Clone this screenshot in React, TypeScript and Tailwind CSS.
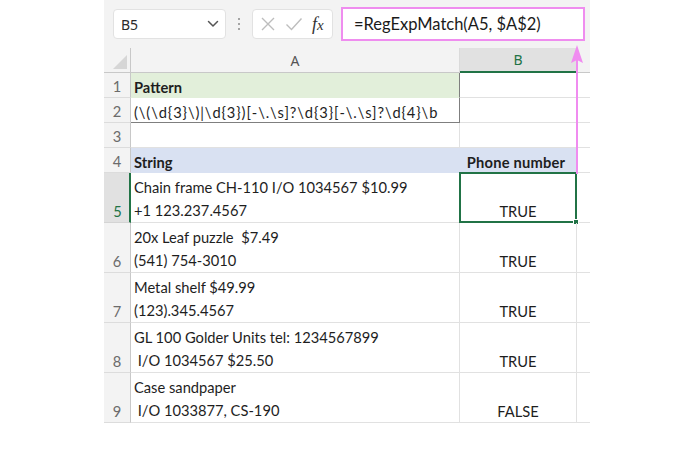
import React from "react";

const rows: { n: number; a: string[]; b: string }[] = [
  { n: 5, a: ["Chain frame CH-110 I/O 1034567 $10.99", "+1 123.237.4567"], b: "TRUE" },
  { n: 6, a: ["20x Leaf puzzle  $7.49", "(541) 754-3010"], b: "TRUE" },
  { n: 7, a: ["Metal shelf $49.99", "(123).345.4567"], b: "TRUE" },
  { n: 8, a: ["GL 100 Golder Units tel: 1234567899", " I/O 1034567 $25.50"], b: "TRUE" },
  { n: 9, a: ["Case sandpaper", " I/O 1033877, CS-190"], b: "FALSE" },
];

function RowHead({ n, active }: { n: number | string; active?: boolean }) {
  return (
    <div
      className={
        active
          ? "w-[27px] shrink-0 bg-[#e1e1e1] text-[#217346] border-b border-[#d4d4d4] border-r-2 border-r-[#217346] flex items-end justify-center pb-[1px] pl-[2px]"
          : "w-[27px] shrink-0 bg-[#f3f3f3] text-[#6b6b6b] border-b border-[#dcdcdc] border-r border-r-[#c8c8c8] flex items-end justify-center pb-[1px]"
      }
    >
      <span className="leading-[20px]">{n}</span>
    </div>
  );
}

export default function App() {
  return (
    <div className="w-[700px] h-[450px] bg-white relative overflow-hidden font-['Lato','Liberation_Sans',sans-serif] text-[14.7px] text-[#1e1e1e]">
      <div className="ml-[104px] w-[486px]">
        {/* Toolbar */}
        <div className="h-[48px] bg-[#f3f3f3] flex items-center pl-[9px]">
          <div className="w-[113px] h-[30px] bg-white border border-[#e2e2e2] rounded-[4px] flex items-center justify-between pl-[7px] pr-[6px]">
            <span className="text-[14px] text-[#2a2a2a] font-['Noto_Sans',sans-serif]">B5</span>
            <svg width="12" height="8" viewBox="0 0 12 8">
              <path d="M1.5 1.5 L6 6 L10.5 1.5" fill="none" stroke="#555" strokeWidth="1.5" strokeLinecap="round" strokeLinejoin="round" />
            </svg>
          </div>
          <div className="w-[26px] flex flex-col items-center justify-center gap-[3px]">
            <span className="w-[2px] h-[2px] bg-[#8a8a8a] rounded-full" />
            <span className="w-[2px] h-[2px] bg-[#8a8a8a] rounded-full" />
            <span className="w-[2px] h-[2px] bg-[#8a8a8a] rounded-full" />
          </div>
          <div className="w-[81px] h-[30px] bg-white border border-[#e2e2e2] rounded-[4px] flex items-center pl-[7px]">
            <svg width="16" height="16" viewBox="0 0 16 16">
              <path d="M2 2 L14 14 M14 2 L2 14" stroke="#bdbdbd" strokeWidth="1.4" fill="none" />
            </svg>
            <svg width="18" height="16" viewBox="0 0 18 16" className="ml-[9px]">
              <path d="M1.5 8.5 L6.5 13.5 L16.5 2.5" stroke="#bdbdbd" strokeWidth="1.4" fill="none" />
            </svg>
            <span className="ml-[9px] font-['Liberation_Serif',serif] italic text-[18px] text-[#333] leading-none">
              f<span className="text-[15px]">x</span>
            </span>
          </div>
          <div className="ml-[8px] w-[244px] h-[34px] bg-white border-2 border-[#ef8def] flex items-center pl-[11px]">
            <span className="text-[16.5px] text-[#1a1a1a]">=RegExpMatch(A5, $A$2)</span>
          </div>
        </div>

        {/* Column headers */}
        <div className="flex h-[25px]">
          <div className="w-[27px] shrink-0 bg-[#f3f3f3] border-b border-[#c8c8c8] border-r border-r-[#c8c8c8] relative">
            <svg className="absolute right-[3px] bottom-[3px]" width="14" height="14" viewBox="0 0 14 14">
              <path d="M14 0 L14 14 L0 14 Z" fill="#d6d6d6" />
            </svg>
          </div>
          <div className="w-[329px] shrink-0 bg-[#f3f3f3] border-b border-[#c8c8c8] border-r border-r-[#dadada] flex items-center justify-center text-[#555] text-[14px] font-['Noto_Sans',sans-serif]">
            A
          </div>
          <div className="w-[117px] shrink-0 bg-[#e1e1e1] border-b-2 border-[#217346] border-r border-r-[#cfcfcf] flex items-center justify-center text-[#217346] text-[14px] font-['Noto_Sans',sans-serif]">
            B
          </div>
          <div className="flex-1 bg-[#f3f3f3] border-b border-[#c8c8c8]" />
        </div>

        {/* Row 1 */}
        <div className="flex h-[25px]">
          <RowHead n={1} />
          <div className="w-[329px] shrink-0 bg-[#e2efda] border-b border-[#e2efda] border-r border-r-[#7f7f7f] flex items-end pl-[3px] font-bold">
            <span className="leading-[20px]">Pattern</span>
          </div>
          <div className="w-[117px] shrink-0 border-b border-[#e1e1e1] border-r border-r-[#e1e1e1]" />
          <div className="flex-1 border-b border-[#e1e1e1]" />
        </div>

        {/* Row 2 */}
        <div className="flex h-[25px]">
          <RowHead n={2} />
          <div className="w-[329px] shrink-0 border-b border-[#7f7f7f] border-r border-r-[#7f7f7f] flex items-end pl-[3px]">
            <span className="leading-[20px] whitespace-pre tracking-[0.9px]">{"(\\(\\d{3}\\)|\\d{3})[-\\.\\s]?\\d{3}[-\\.\\s]?\\d{4}\\b"}</span>
          </div>
          <div className="w-[117px] shrink-0 border-b border-[#e1e1e1] border-r border-r-[#e1e1e1]" />
          <div className="flex-1 border-b border-[#e1e1e1]" />
        </div>

        {/* Row 3 */}
        <div className="flex h-[25px]">
          <RowHead n={3} />
          <div className="w-[329px] shrink-0 border-b border-[#e1e1e1] border-r border-r-[#e1e1e1]" />
          <div className="w-[117px] shrink-0 border-b border-[#e1e1e1] border-r border-r-[#e1e1e1]" />
          <div className="flex-1 border-b border-[#e1e1e1]" />
        </div>

        {/* Row 4 */}
        <div className="flex h-[25px]">
          <RowHead n={4} />
          <div className="w-[329px] shrink-0 bg-[#d9e1f2] border-b border-[#d9e1f2] border-r border-r-[#d9e1f2] flex items-end pl-[3px] font-bold">
            <span className="leading-[20px]">String</span>
          </div>
          <div className="w-[117px] shrink-0 bg-[#d9e1f2] border-b border-[#d9e1f2] border-r border-r-[#e1e1e1] flex items-end justify-center font-bold">
            <span className="leading-[20px] pr-[4px] tracking-[0.2px]">Phone number</span>
          </div>
          <div className="flex-1 border-b border-[#e1e1e1]" />
        </div>

        {rows.map((r) => (
          <div key={r.n} className="flex h-[50px]">
            <RowHead n={r.n} active={r.n === 5} />
            <div className="w-[329px] shrink-0 border-b border-[#e1e1e1] border-r border-r-[#e1e1e1] flex flex-col justify-end pl-[3px]">
              {r.a.map((t, i) => (
                <span key={i} className="leading-[23px] whitespace-pre">
                  {t}
                </span>
              ))}
            </div>
            <div className="w-[117px] shrink-0 border-b border-[#e1e1e1] border-r border-r-[#e1e1e1] flex items-end justify-center pb-[1px] relative">
              <span className="leading-[20px]">{r.b}</span>
              {r.n === 5 && (
                <>
                  <div className="absolute -top-[1px] -left-[1px] -right-[1px] -bottom-[1px] border-2 border-[#217346]" />
                  <div className="absolute -right-[3px] -bottom-[3px] w-[6px] h-[6px] bg-[#217346] border border-white" />
                </>
              )}
            </div>
            <div className="flex-1 border-b border-[#e1e1e1]" />
          </div>
        ))}
      </div>

      {/* Pink arrow overlay */}
      <svg className="absolute left-[568px] top-[44px]" width="18" height="132" viewBox="0 0 18 132">
        <path d="M9 14 L9 130" stroke="#f08cf0" strokeWidth="2" />
        <path d="M9 1 L15 19 L9 16 L3 19 Z" fill="#f08cf0" />
      </svg>
    </div>
  );
}
